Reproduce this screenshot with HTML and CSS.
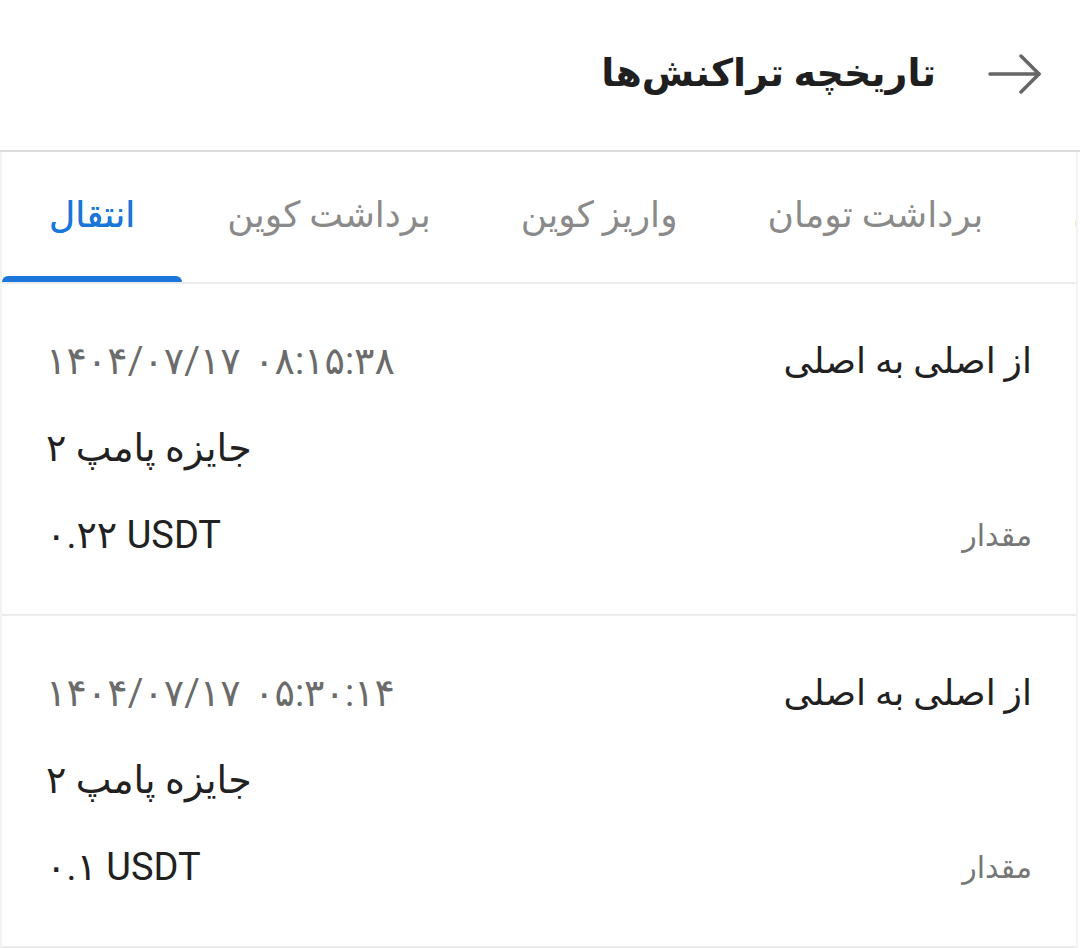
FILE: index.html
```html
<!DOCTYPE html>
<html lang="fa" dir="rtl">
<head>
  <meta charset="UTF-8">
  <meta name="viewport" content="width=device-width, initial-scale=1.0">
  <title>تاریخچه تراکنش‌ها</title>
  <link rel="stylesheet" href="styles.css">
</head>
<body>
  <!-- Header -->
  <header class="page-header">
    <button class="back-btn" aria-label="بازگشت">
      <svg width="54" height="40" viewBox="0 0 54 40" fill="none" stroke="currentColor" stroke-width="3.5" stroke-linecap="round" stroke-linejoin="round">
        <line x1="2" y1="20" x2="51" y2="20"/>
        <polyline points="33,2 51,20 33,38"/>
      </svg>
    </button>
    <h1 class="page-title">تاریخچه تراکنش‌ها</h1>
  </header>

  <main class="history">
    <!-- Tabs -->
    <nav class="tabs">
      <a class="tab">واریز تومان</a>
      <a class="tab">برداشت تومان</a>
      <a class="tab">واریز کوین</a>
      <a class="tab">برداشت کوین</a>
      <a class="tab active">انتقال</a>
    </nav>

    <!-- Transactions -->
    <div class="tx-list">
      <div class="tx-card">
        <div class="tx-row">
          <span class="tx-title">از اصلی به اصلی</span>
          <span class="tx-date" dir="ltr">۱۴۰۴/۰۷/۱۷ ۰۸:۱۵:۳۸</span>
        </div>
        <div class="tx-row">
          <span class="tx-label"></span>
          <span class="tx-value">جایزه پامپ ۲</span>
        </div>
        <div class="tx-row">
          <span class="tx-label">مقدار</span>
          <span class="tx-value" dir="ltr">۰.۲۲ USDT</span>
        </div>
      </div>

      <div class="tx-card">
        <div class="tx-row">
          <span class="tx-title">از اصلی به اصلی</span>
          <span class="tx-date" dir="ltr">۱۴۰۴/۰۷/۱۷ ۰۵:۳۰:۱۴</span>
        </div>
        <div class="tx-row">
          <span class="tx-label"></span>
          <span class="tx-value">جایزه پامپ ۲</span>
        </div>
        <div class="tx-row">
          <span class="tx-label">مقدار</span>
          <span class="tx-value" dir="ltr">۰.۱ USDT</span>
        </div>
      </div>
    </div>
  </main>
</body>
</html>
```

FILE: styles.css
```css
* {
  margin: 0;
  padding: 0;
  box-sizing: border-box;
}

:root {
  --text: #212121;
  --muted: #6b6b6b;
  --tab-muted: #8a8a8a;
  --primary: #1a76d8;
  --line: #ececec;
}

body {
  font-family: Roboto, "DejaVu Sans", sans-serif;
  background: #fff;
  color: var(--text);
  width: 1080px;
  height: 948px;
  overflow: hidden;
}

/* Header */
.page-header {
  height: 152px;
  display: flex;
  align-items: center;
  gap: 52px;
  padding: 0 38px 4px 0;
  border-bottom: 2px solid #dcdcdc;
}

.back-btn {
  display: flex;
  background: none;
  border: none;
  color: #666;
  cursor: pointer;
  margin-top: 2px;
}

.page-title {
  font-size: 38px;
  font-weight: 700;
  color: #1f1f1f;
}

/* Tabs */
.history {
  border-left: 2px solid #f3f3f3;
  border-right: 2px solid #f3f3f3;
  margin-right: 2px;
}

.tabs {
  display: flex;
  justify-content: flex-end;
  height: 132px;
  overflow: hidden;
  border-bottom: 2px solid var(--line);
}

.tab {
  position: relative;
  flex-shrink: 0;
  display: flex;
  align-items: center;
  padding: 0 45px 4px;
  font-size: 36px;
  color: var(--tab-muted);
  white-space: nowrap;
  cursor: pointer;
}

.tab.active {
  padding: 0 47px 4px;
  color: var(--primary);
  text-shadow: 0 0 0.6px var(--primary);
}

.tab.active::after {
  content: '';
  position: absolute;
  left: 0;
  right: 0;
  bottom: 0;
  height: 6px;
  border-radius: 6px 6px 0 0;
  background: var(--primary);
}

/* Transactions */
.tx-card {
  height: 332px;
  padding: 52px 44px 0;
  display: flex;
  flex-direction: column;
  gap: 37px;
  border-bottom: 2px solid var(--line);
}

.tx-row {
  height: 50px;
  display: flex;
  justify-content: space-between;
  align-items: center;
}

.tx-title {
  font-size: 36px;
  color: var(--text);
}

.tx-date {
  font-size: 38px;
  word-spacing: 4px;
  color: var(--muted);
}

.tx-label {
  font-size: 30px;
  color: #777;
}

.tx-value {
  font-size: 38px;
  color: var(--text);
}
```
